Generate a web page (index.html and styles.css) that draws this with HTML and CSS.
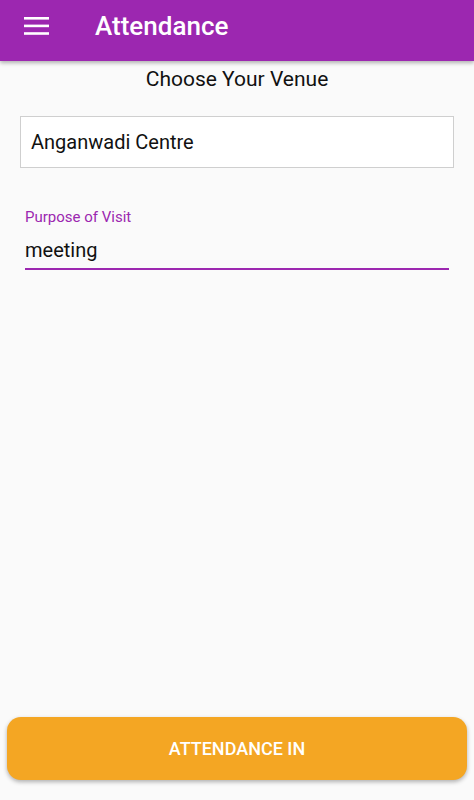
FILE: index.html
```html
<!DOCTYPE html>
<html lang="en">
<head>
    <meta charset="UTF-8">
    <title>Attendance</title>
    <link rel="stylesheet" href="styles.css">
</head>
<body>
    <div class="app">
        <header class="app-bar">
            <svg class="menu-icon" width="25" height="18" viewBox="0 0 25 18">
                <rect x="0" y="0" width="25" height="2.6" fill="#fff"/>
                <rect x="0" y="7.6" width="25" height="2.6" fill="#fff"/>
                <rect x="0" y="15.2" width="25" height="2.6" fill="#fff"/>
            </svg>
            <h1 class="title">Attendance</h1>
        </header>
        <main class="content">
            <p class="venue-label">Choose Your Venue</p>
            <div class="venue-box">Anganwadi Centre</div>
            <div class="field">
                <label class="field-label">Purpose of Visit</label>
                <div class="field-input">meeting</div>
            </div>
        </main>
        <div class="footer">
            <button class="attendance-btn">ATTENDANCE IN</button>
        </div>
    </div>
</body>
</html>
```

FILE: styles.css
```css
body {
    margin: 0;
    font-family: Roboto, "Noto Sans", sans-serif;
    background-color: #fafafa;
}
.app {
    height: 800px;
    display: flex;
    flex-direction: column;
}
.app-bar {
    height: 61px;
    background-color: #9c27b0;
    display: flex;
    align-items: center;
    padding-left: 24px;
    box-shadow: 0 2px 4px rgba(0, 0, 0, 0.3);
    position: relative;
}
.menu-icon {
    margin-top: -10px;
}
.title {
    margin: 0 0 0 46px;
    color: #fff;
    font-size: 26px;
    font-weight: 500;
    margin-top: -10px;
}
.content {
    flex: 1;
    padding: 0 20px;
}
.venue-label {
    margin: 6px 0 0;
    text-align: center;
    font-size: 21px;
    color: #111;
    line-height: 24px;
}
.venue-box {
    margin-top: 25px;
    height: 50px;
    border: 1px solid #cfcfcf;
    background-color: #fff;
    display: flex;
    align-items: center;
    padding-left: 10px;
    font-size: 20px;
    color: #111;
}
.field {
    margin: 40px 5px 0;
}
.field-label {
    display: block;
    font-size: 15px;
    color: #9c27b0;
    line-height: 18px;
}
.field-input {
    font-size: 20px;
    color: #111;
    line-height: 24px;
    margin-top: 12px;
    padding-bottom: 6px;
    border-bottom: 2px solid #9c27b0;
}
.footer {
    padding: 0 7px 20px;
}
.attendance-btn {
    width: 100%;
    height: 63px;
    border: none;
    border-radius: 14px;
    background-color: #f4a623;
    color: #fff;
    font-family: Roboto, sans-serif;
    font-size: 18px;
    font-weight: 500;
    box-shadow: 0 2px 4px rgba(0, 0, 0, 0.3);
    cursor: pointer;
}
```
